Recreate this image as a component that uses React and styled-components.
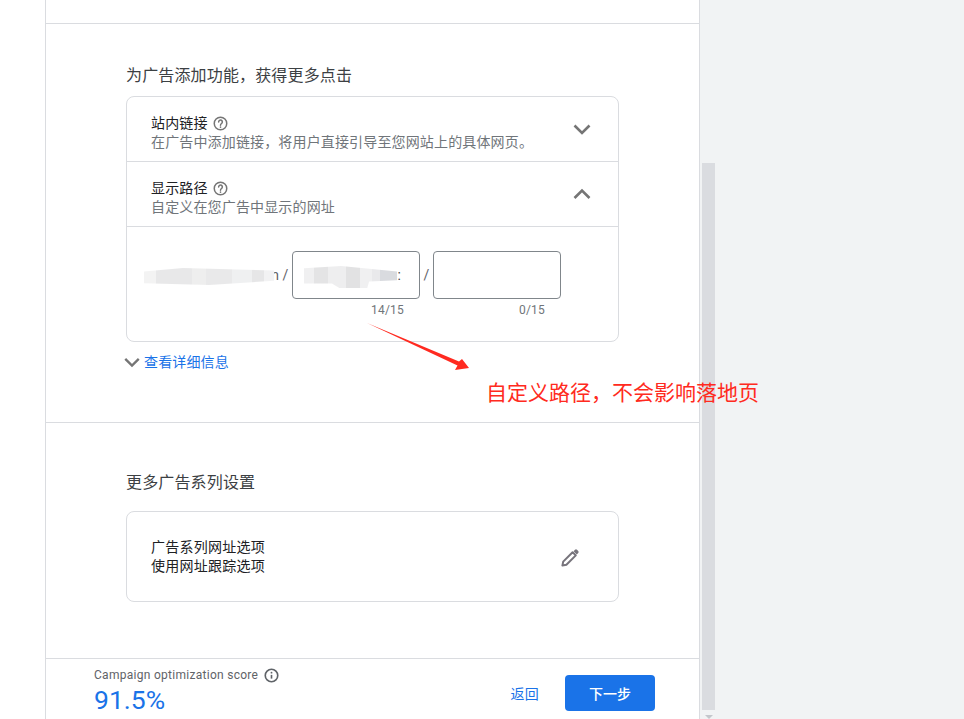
import React from "react";
import styled, { createGlobalStyle } from "styled-components";

const GlobalStyle = createGlobalStyle`
  html, body {
    margin: 0;
    padding: 0;
    height: 719px;
    overflow: hidden;
    background: #fff;
    font-family: Roboto, "Noto Sans CJK SC", sans-serif;
    color: #202124;
  }
`;

const Page = styled.div`
  position: relative;
  display: flex;
  width: 964px;
  height: 719px;
  overflow: hidden;
`;

const Gutter = styled.div`
  width: 45px;
  flex: none;
`;

const Main = styled.main`
  width: 653px;
  flex: none;
  display: flex;
  flex-direction: column;
  border-left: 1px solid #dadce0;
  border-right: 1px solid #dadce0;
`;

const TopStub = styled.div`
  height: 23px;
  flex: none;
  border-bottom: 1px solid #dadce0;
`;

const FeatureSection = styled.section`
  height: 399px;
  flex: none;
  box-sizing: border-box;
  padding: 41px 80px 0;
  border-bottom: 1px solid #dadce0;
`;

const MoreSection = styled.section`
  flex: 1;
  padding: 49px 80px 0;
  border-bottom: 1px solid #dadce0;
`;

const SectionTitle = styled.h2`
  margin: 0;
  height: 22px;
  font-size: 16px;
  line-height: 22px;
  font-weight: 400;
  letter-spacing: 0.15px;
  color: #3c4043;
`;

const Card = styled.div`
  width: 491px;
  margin-top: ${(p) => p.$gap}px;
  border: 1px solid #dadce0;
  border-radius: 8px;
  background: #fff;
`;

const AccordionRow = styled.div`
  height: 64px;
  display: flex;
  align-items: center;
  justify-content: space-between;
  padding: 0 26px 0 24px;
  border-bottom: 1px solid #dadce0;
`;

const RowText = styled.div`
  align-self: flex-start;
  display: flex;
  flex-direction: column;
  padding-top: 16px;
`;

const RowTitle = styled.div`
  display: flex;
  align-items: center;
  gap: 5px;
  height: 20px;
  font-size: 14px;
  line-height: 20px;
  letter-spacing: 0.15px;
  color: #202124;
`;

const RowHint = styled.div`
  height: 18px;
  font-size: 14px;
  line-height: 18px;
  letter-spacing: 0.15px;
  color: #70757a;
`;

const HelpIcon = () => (
  <svg width="15" height="15" viewBox="0 0 24 24" fill="none" stroke="#757575" strokeWidth="2.4">
    <circle cx="12" cy="12" r="10" />
    <path d="M9 9.5a3 3 0 1 1 4.6 2.5c-1 .7-1.6 1.3-1.6 2.6" strokeLinecap="round" />
    <circle cx="12" cy="17.8" r="1.3" fill="#757575" stroke="none" />
  </svg>
);

const ChevronWrap = styled.span`
  display: flex;
  margin-top: ${(p) => p.$lift}px;
`;

const Chevron = ({ up, size = 20, lift = 0 }) => (
  <ChevronWrap $lift={lift}>
    <svg width={size} height={size} viewBox="0 0 20 20" fill="none" stroke="#757575" strokeWidth="2.6">
      <path d={up ? "M2.5 14 10 6.5 17.5 14" : "M2.5 6.5 10 14 17.5 6.5"} />
    </svg>
  </ChevronWrap>
);

const PathPanel = styled.div`
  height: 114px;
  box-sizing: border-box;
  padding: 24px 0 0 17px;
  display: flex;
  align-items: flex-start;
`;

const Domain = styled.div`
  position: relative;
  width: 135px;
  height: 48px;
  flex: none;
  display: flex;
  align-items: center;
  justify-content: flex-end;
  font-size: 14px;
  color: #5f6368;
`;

const Slash = styled.span`
  width: ${(p) => p.$width}px;
  flex: none;
  height: 48px;
  line-height: 48px;
  font-size: 14px;
  color: #5f6368;
  text-align: center;
`;

const Field = styled.div`
  flex: none;
  display: flex;
  flex-direction: column;
  width: 128px;
`;

const FieldBox = styled.div`
  position: relative;
  height: 46px;
  border: 1px solid #80868b;
  border-radius: 4px;
  display: flex;
  align-items: center;
  justify-content: flex-end;
  padding-right: 18px;
  font-size: 14px;
  color: #3c4043;
`;

const Counter = styled.div`
  margin-top: 4px;
  padding-right: ${(p) => p.$right}px;
  text-align: right;
  font-size: 12px;
  line-height: 14px;
  letter-spacing: 0.2px;
  color: #70757a;
`;

/* pixelated smear that hides part of the URL in the source picture */
const DomainSmear = styled.div`
  position: absolute;
  left: 0;
  top: 17px;
  width: 130px;
  height: 17px;
  clip-path: polygon(0 20%, 30% 0, 100% 15%, 100% 75%, 50% 100%, 0 90%);
  background: linear-gradient(
    90deg,
    #f3f3f3 0 12px,
    #e8e8e9 12px 48px,
    #eeeeee 48px 62px,
    #e9e9ea 62px 88px,
    #eff0f1 88px 108px,
    #e6e6e7 108px 120px,
    #f2f2f3 120px 130px
  );
`;

const FieldSmear = styled.div`
  position: absolute;
  left: 11px;
  top: 14px;
  width: 93px;
  height: 22px;
  clip-path: polygon(0 10%, 40% 0, 100% 25%, 100% 65%, 70% 70%, 68% 100%, 38% 100%, 30% 80%, 0 80%);
  background: linear-gradient(
    90deg,
    #f0f0f1 0 10px,
    #e4e4e5 10px 24px,
    #eeeeef 24px 42px,
    #e2e2e3 42px 56px,
    #f0f0f1 56px 68px,
    #e9e9eb 68px 76px,
    #d9dbdf 76px 93px
  );
`;

const DetailsLink = styled.div`
  display: flex;
  align-items: center;
  gap: 3px;
  margin: 10px 0 0 -3px;
  height: 20px;
  font-size: 14px;
  line-height: 20px;
  letter-spacing: 0.15px;
  color: #1a73e8;
`;

const TrackingBody = styled.div`
  height: 89px;
  display: flex;
  align-items: center;
  justify-content: space-between;
  padding: 0 38px 0 24px;
`;

const TrackingText = styled.div`
  font-size: 14px;
  line-height: 19px;
  letter-spacing: 0.25px;
  color: #202124;
`;

const PencilWrap = styled.span`
  display: flex;
  margin-top: 2px;
`;

const PencilIcon = () => (
  <PencilWrap>
    <svg width="20" height="20" viewBox="0 0 20 20" fill="none">
      <path d="M2.4 17.6 3.2 13.6 12.6 4.2 15.8 7.4 6.4 16.8Z" stroke="#77747c" strokeWidth="2" strokeLinejoin="round" />
      <path d="M13.6 3.2 15 1.8a1.4 1.4 0 0 1 2 0l1.2 1.2a1.4 1.4 0 0 1 0 2l-1.4 1.4Z" fill="#77747c" />
    </svg>
  </PencilWrap>
);

const Footer = styled.footer`
  height: 60px;
  flex: none;
  display: flex;
  align-items: flex-start;
  justify-content: space-between;
  padding: 0 44px 0 48px;
`;

const Score = styled.div`
  padding-top: 7px;
`;

const ScoreLabel = styled.div`
  display: flex;
  align-items: center;
  gap: 6px;
  height: 18px;
  font-size: 12px;
  line-height: 18px;
  letter-spacing: 0.28px;
  color: #5f6368;
`;

const InfoIcon = () => (
  <svg width="15" height="15" viewBox="0 0 24 24" fill="none" stroke="#5f6368" strokeWidth="2.6">
    <circle cx="12" cy="12" r="10" />
    <path d="M12 11v6" />
    <circle cx="12" cy="7.4" r="1.5" fill="#5f6368" stroke="none" />
  </svg>
);

const ScoreValue = styled.div`
  font-size: 26.5px;
  line-height: 31px;
  color: #1a73e8;
`;

const Actions = styled.div`
  display: flex;
  align-items: center;
  gap: 26px;
  margin-top: 16px;
`;

const BackLink = styled.span`
  font-size: 14px;
  letter-spacing: 0.3px;
  color: #1a73e8;
`;

const NextButton = styled.button`
  width: 90px;
  height: 36px;
  border: 0;
  border-radius: 4px;
  background: #1a73e8;
  color: #fff;
  font: 500 14px Roboto, "Noto Sans CJK SC", sans-serif;
`;

const SidePanel = styled.aside`
  flex: 1;
  background: #f1f3f4;
  padding: 163px 0 0 2px;
`;

const ScrollThumb = styled.div`
  width: 13px;
  height: 547px;
  background: #dadce0;
`;

const ScrollArrow = styled.div`
  width: 0;
  height: 0;
  margin: 5px 0 0 3px;
  border-left: 4px solid transparent;
  border-right: 4px solid transparent;
  border-top: 4px solid #c4c7cc;
`;

const Annotation = styled.div`
  position: absolute;
  left: 486px;
  top: 379px;
  font-size: 21px;
  line-height: 28px;
  color: #ff2a20;
  white-space: nowrap;
`;

const AnnotationArrow = styled.svg`
  position: absolute;
  left: 360px;
  top: 316px;
`;

export default function App() {
  return (
    <Page>
      <GlobalStyle />
      <Gutter />
      <Main>
        <TopStub />
        <FeatureSection>
          <SectionTitle>为广告添加功能，获得更多点击</SectionTitle>
          <Card $gap={9}>
            <AccordionRow>
              <RowText>
                <RowTitle>站内链接 <HelpIcon /></RowTitle>
                <RowHint>在广告中添加链接，将用户直接引导至您网站上的具体网页。</RowHint>
              </RowText>
              <Chevron lift={-1} />
            </AccordionRow>
            <AccordionRow>
              <RowText>
                <RowTitle>显示路径 <HelpIcon /></RowTitle>
                <RowHint>自定义在您广告中显示的网址</RowHint>
              </RowText>
              <Chevron up lift={-1} />
            </AccordionRow>
            <PathPanel>
              <Domain>
                n
                <DomainSmear />
              </Domain>
              <Slash $width={13}>/</Slash>
              <Field>
                <FieldBox>
                  :
                  <FieldSmear />
                </FieldBox>
                <Counter $right={16}>14/15</Counter>
              </Field>
              <Slash $width={13}>/</Slash>
              <Field>
                <FieldBox />
                <Counter $right={16}>0/15</Counter>
              </Field>
            </PathPanel>
          </Card>
          <DetailsLink>
            <Chevron size={18} />
            查看详细信息
          </DetailsLink>
        </FeatureSection>
        <MoreSection>
          <SectionTitle>更多广告系列设置</SectionTitle>
          <Card $gap={17}>
            <TrackingBody>
              <TrackingText>
                广告系列网址选项
                <br />
                使用网址跟踪选项
              </TrackingText>
              <PencilIcon />
            </TrackingBody>
          </Card>
        </MoreSection>
        <Footer>
          <Score>
            <ScoreLabel>Campaign optimization score <InfoIcon /></ScoreLabel>
            <ScoreValue>91.5%</ScoreValue>
          </Score>
          <Actions>
            <BackLink>返回</BackLink>
            <NextButton>下一步</NextButton>
          </Actions>
        </Footer>
      </Main>
      <SidePanel>
        <ScrollThumb />
        <ScrollArrow />
      </SidePanel>
      <AnnotationArrow width="115" height="60" viewBox="0 0 115 60">
        <path d="M7 7 99 45.5 102 43 109 52 95 54 97.5 49.5Z" fill="#ff2a20" />
      </AnnotationArrow>
      <Annotation>自定义路径，不会影响落地页</Annotation>
    </Page>
  );
}
